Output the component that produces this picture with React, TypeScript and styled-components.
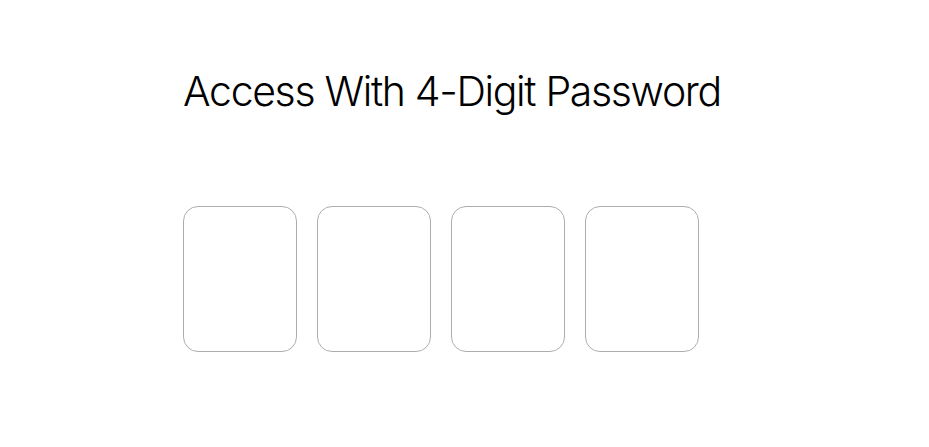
import styled, { createGlobalStyle } from "styled-components";

const GlobalStyle = createGlobalStyle`
	body {
		margin: 0;
		background: #fff;
		font-family: Inter, "Noto Sans", sans-serif;
	}
`;

const Page = styled.div`
	display: flex;
	flex-direction: column;
	padding: 63px 0 0 183px;
`;

const Title = styled.h1`
	margin: 0;
	font-size: 41px;
	font-weight: 300;
	line-height: 56px;
	letter-spacing: -1.35px;
	color: #000;
`;

const Digits = styled.div`
	display: flex;
	gap: 20px;
	margin-top: 87px;
`;

const DigitBox = styled.input`
	box-sizing: border-box;
	width: 114px;
	height: 146px;
	border: 1px solid #adadad;
	border-radius: 15px;
	background: #fff;
	outline: none;
	text-align: center;
	font-size: 48px;
	font-family: inherit;
`;

const App = () => {
	return (
		<>
			<GlobalStyle />
			<Page>
				<Title>Access With 4-Digit Password</Title>
				<Digits>
					{[0, 1, 2, 3].map(i => (
						<DigitBox key={i} type="password" maxLength={1} />
					))}
				</Digits>
			</Page>
		</>
	);
};

export default App;
